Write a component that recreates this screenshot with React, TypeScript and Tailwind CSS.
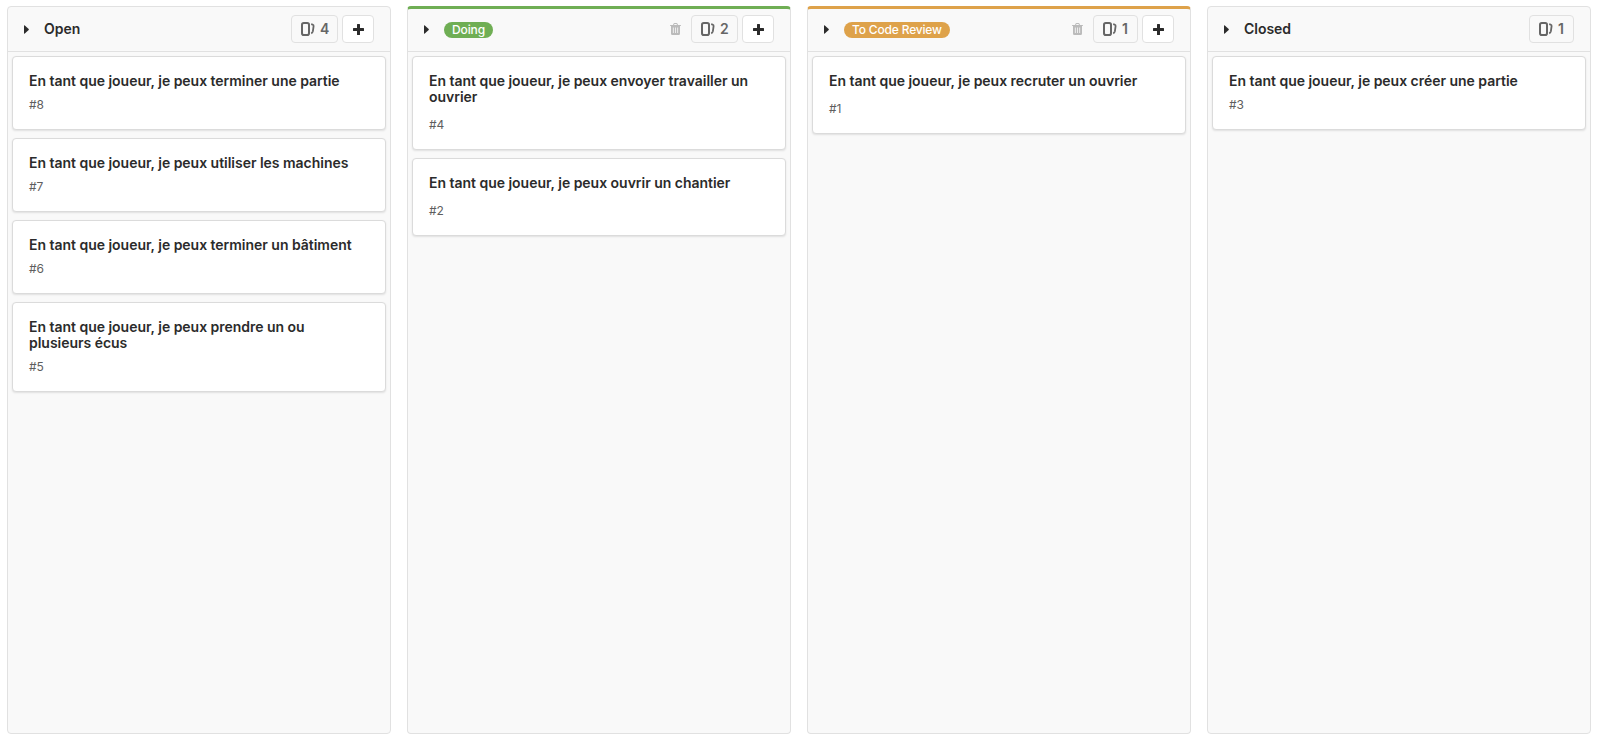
type Issue = { title: string; id: number };
type Column = {
  name: string;
  kind: 'plain' | 'doing' | 'review';
  canAdd: boolean;
  issues: Issue[];
};

const columns: Column[] = [
  {
    name: 'Open',
    kind: 'plain',
    canAdd: true,
    issues: [
      { title: 'En tant que joueur, je peux terminer une partie', id: 8 },
      { title: 'En tant que joueur, je peux utiliser les machines', id: 7 },
      { title: 'En tant que joueur, je peux terminer un bâtiment', id: 6 },
      { title: 'En tant que joueur, je peux prendre un ou plusieurs écus', id: 5 },
    ],
  },
  {
    name: 'Doing',
    kind: 'doing',
    canAdd: true,
    issues: [
      { title: 'En tant que joueur, je peux envoyer travailler un ouvrier', id: 4 },
      { title: 'En tant que joueur, je peux ouvrir un chantier', id: 2 },
    ],
  },
  {
    name: 'To Code Review',
    kind: 'review',
    canAdd: true,
    issues: [{ title: 'En tant que joueur, je peux recruter un ouvrier', id: 1 }],
  },
  {
    name: 'Closed',
    kind: 'plain',
    canAdd: false,
    issues: [{ title: 'En tant que joueur, je peux créer une partie', id: 3 }],
  },
];

const topBorder = {
  plain: 'border-t border-t-[#e1e1e1]',
  doing: 'border-t-[3px] border-t-[#6fae54]',
  review: 'border-t-[3px] border-t-[#dea24a]',
};
const headerHeight = { plain: 'h-[45px]', doing: 'h-[43px] pb-0.5', review: 'h-[43px] pb-0.5' };
const badgeStyle = {
  plain: '',
  doing: 'bg-[#6fae54] tracking-[-0.12px]',
  review: 'bg-[#dea24a] tracking-[-0.17px]',
};

function CaretIcon() {
  return (
    <svg className="h-[9px] w-[5px]" viewBox="0 0 5 9" fill="#2b2b2b">
      <path d="M0 0.9Q0 0 0.8 0.5L4.7 4.1Q5 4.5 4.7 4.9L0.8 8.5Q0 9 0 8.1Z" />
    </svg>
  );
}

function IssuesIcon() {
  return (
    <svg className="size-3.5" viewBox="0 0 14 14" fill="none" stroke="#666">
      <rect x="1" y="1" width="7" height="12" rx="1.8" strokeWidth="2" />
      <path d="M10.2 2.2L11.6 2.5Q12.8 2.9 12.6 4.2L11.9 9.2Q11.6 10.8 10.2 11.4" strokeWidth="1.8" />
    </svg>
  );
}

function TrashIcon() {
  return (
    <svg className="h-3 w-[11px]" viewBox="0 0 11 12" fill="#bbb">
      <path
        fillRule="evenodd"
        d="M3 2L3.5 0.7Q3.8 0 4.5 0H6.5Q7.2 0 7.5 0.7L8 2H10.6Q11 2 11 2.4V2.8Q11 3.1 10.6 3.1H10V10.5Q10 12 8.7 12H2.3Q1 12 1 10.5V3.1H0.4Q0 3.1 0 2.8V2.4Q0 2 0.4 2ZM4.1 2H6.9L6.6 1H4.4ZM2.9 4.5V10H3.7V4.5ZM5.1 4.5V10H5.9V4.5ZM7.3 4.5V10H8.1V4.5Z"
      />
    </svg>
  );
}

function PlusIcon() {
  return (
    <svg className="size-[11px]" viewBox="0 0 11 11" fill="#2b2b2b">
      <path d="M4.6 0H6.4Q7 0 7 0.6V4H10.4Q11 4 11 4.6V6.4Q11 7 10.4 7H7V10.4Q7 11 6.4 11H4.6Q4 11 4 10.4V7H0.6Q0 7 0 6.4V4.6Q0 4 0.6 4H4V0.6Q4 0 4.6 0Z" />
    </svg>
  );
}

function Card({ issue, spaced }: { issue: Issue; spaced: boolean }) {
  return (
    <li className="rounded border border-[#dbdbdb] bg-white p-4 shadow-[0_1px_2px_rgba(0,0,0,0.1)]">
      <h4 className="text-sm leading-4 font-semibold tracking-[-0.026px] text-[#2b2b2b]">{issue.title}</h4>
      <p className={`text-xs leading-4 text-[#5e5e5e] ${spaced ? 'mt-3' : 'mt-2'}`}>#{issue.id}</p>
    </li>
  );
}

function BoardColumn({ column }: { column: Column }) {
  const labelled = column.kind !== 'plain';
  const count = column.issues.length;
  return (
    <section
      className={`flex w-96 shrink-0 flex-col rounded border-x border-b border-[#e1e1e1] bg-[#f9f9f9] ${topBorder[column.kind]}`}
    >
      <header
        className={`flex shrink-0 items-center border-b border-[#e1e1e1] px-4 ${headerHeight[column.kind]}`}
      >
        <CaretIcon />
        {labelled ? (
          <span
            className={`mt-0.5 ml-[15px] rounded-full px-2 text-xs leading-4 font-medium text-white ${badgeStyle[column.kind]}`}
          >
            {column.name}
          </span>
        ) : (
          <span className="ml-[15px] text-sm leading-4 font-semibold tracking-[-0.026px] text-[#2b2b2b]">
            {column.name}
          </span>
        )}
        <div className="ml-auto flex items-center">
          {labelled && (
            <span className="mr-2.5">
              <TrashIcon />
            </span>
          )}
          <span
            className={`flex h-7 items-center gap-[5px] rounded border border-[#e1e1e1] pl-[9px] text-sm font-semibold text-[#666] ${count === 1 ? 'w-[45px]' : 'w-[47px]'}`}
          >
            <IssuesIcon />
            {count}
          </span>
          {column.canAdd && (
            <button className="ml-1 flex h-7 w-8 items-center justify-center rounded border border-[#e1e1e1] bg-white">
              <PlusIcon />
            </button>
          )}
        </div>
      </header>
      <ul className="flex flex-col gap-2 p-1">
        {column.issues.map((issue) => (
          <Card key={issue.id} issue={issue} spaced={labelled} />
        ))}
      </ul>
    </section>
  );
}

export default function App() {
  return (
    <main className="flex h-[741px] w-[1597px] gap-4 overflow-hidden bg-white px-[7px] pt-1.5 pb-[7px] font-['Inter',sans-serif]">
      {columns.map((column) => (
        <BoardColumn key={column.name} column={column} />
      ))}
    </main>
  );
}
